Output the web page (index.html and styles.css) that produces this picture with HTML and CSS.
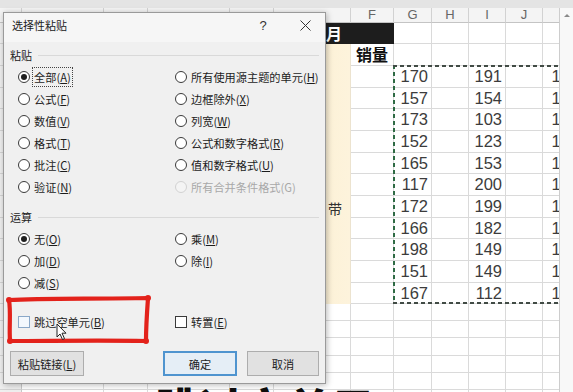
FILE: index.html
```html
<!DOCTYPE html>
<html lang="zh-CN">
<head>
<meta charset="utf-8">
<title>选择性粘贴</title>
<link rel="stylesheet" href="styles.css">
</head>
<body>
<div class="screen">
  <div class="topbar"></div>
  <div class="workarea">
    <div class="sheet-view">
      <div class="sheet">
        <div class="c hd corner"></div><div class="c hd"></div><div class="c hd"></div><div class="c hd"></div><div class="c hd"></div><div class="c hd"></div><div class="c hd">F</div><div class="c hd">G</div><div class="c hd">H</div><div class="c hd">I</div><div class="c hd">J</div><div class="c hd"></div>

        <div class="c rh"></div><div class="c title">1月</div><div class="c"></div><div class="c"></div><div class="c"></div><div class="c"></div><div class="c"></div>

        <div class="c rh"></div><div class="c"></div><div class="c"></div><div class="c"></div><div class="c"></div><div class="c cream"><span>带</span></div><div class="c lbl">销量</div><div class="c"></div><div class="c"></div><div class="c"></div><div class="c"></div><div class="c"></div>

        <div class="c rh"></div><div class="c"></div><div class="c"></div><div class="c"></div><div class="c"></div><div class="c"></div><div class="c num">170</div><div class="c"></div><div class="c num">191</div><div class="c"></div><div class="c num">185</div>
        <div class="c rh"></div><div class="c"></div><div class="c"></div><div class="c"></div><div class="c"></div><div class="c"></div><div class="c num">157</div><div class="c"></div><div class="c num">154</div><div class="c"></div><div class="c num">162</div>
        <div class="c rh"></div><div class="c"></div><div class="c"></div><div class="c"></div><div class="c"></div><div class="c"></div><div class="c num">173</div><div class="c"></div><div class="c num">103</div><div class="c"></div><div class="c num">140</div>
        <div class="c rh"></div><div class="c"></div><div class="c"></div><div class="c"></div><div class="c"></div><div class="c"></div><div class="c num">152</div><div class="c"></div><div class="c num">123</div><div class="c"></div><div class="c num">178</div>
        <div class="c rh"></div><div class="c"></div><div class="c"></div><div class="c"></div><div class="c"></div><div class="c"></div><div class="c num">165</div><div class="c"></div><div class="c num">153</div><div class="c"></div><div class="c num">131</div>
        <div class="c rh"></div><div class="c"></div><div class="c"></div><div class="c"></div><div class="c"></div><div class="c"></div><div class="c num">117</div><div class="c"></div><div class="c num">200</div><div class="c"></div><div class="c num">159</div>
        <div class="c rh"></div><div class="c"></div><div class="c"></div><div class="c"></div><div class="c"></div><div class="c"></div><div class="c num">172</div><div class="c"></div><div class="c num">199</div><div class="c"></div><div class="c num">120</div>
        <div class="c rh"></div><div class="c"></div><div class="c"></div><div class="c"></div><div class="c"></div><div class="c"></div><div class="c num">166</div><div class="c"></div><div class="c num">182</div><div class="c"></div><div class="c num">193</div>
        <div class="c rh"></div><div class="c"></div><div class="c"></div><div class="c"></div><div class="c"></div><div class="c"></div><div class="c num">198</div><div class="c"></div><div class="c num">149</div><div class="c"></div><div class="c num">166</div>
        <div class="c rh"></div><div class="c"></div><div class="c"></div><div class="c"></div><div class="c"></div><div class="c"></div><div class="c num">151</div><div class="c"></div><div class="c num">149</div><div class="c"></div><div class="c num">174</div>
        <div class="c rh"></div><div class="c"></div><div class="c"></div><div class="c"></div><div class="c"></div><div class="c"></div><div class="c num">167</div><div class="c"></div><div class="c num">112</div><div class="c"></div><div class="c num">128</div>

        <div class="c rh"></div><div class="c"></div><div class="c"></div><div class="c"></div><div class="c"></div><div class="c"></div><div class="c"></div><div class="c"></div><div class="c"></div><div class="c"></div><div class="c"></div><div class="c"></div>
        <div class="c rh"></div><div class="c"></div><div class="c"></div><div class="c"></div><div class="c"></div><div class="c"></div><div class="c"></div><div class="c"></div><div class="c"></div><div class="c"></div><div class="c"></div><div class="c"></div>
        <div class="c rh"></div><div class="c"></div><div class="c"></div><div class="c"></div><div class="c"></div><div class="c"></div><div class="c"></div><div class="c"></div><div class="c"></div><div class="c"></div><div class="c"></div><div class="c"></div>
        <div class="c rh"></div><div class="c"></div><div class="c"></div><div class="c"></div><div class="c"></div><div class="c"></div><div class="c"></div><div class="c"></div><div class="c"></div><div class="c"></div><div class="c"></div><div class="c"></div>
        <div class="c rh"></div><div class="c"></div><div class="c"></div><div class="c"></div><div class="c"></div><div class="c"></div><div class="c"></div><div class="c"></div><div class="c"></div><div class="c"></div><div class="c"></div><div class="c"></div>
        <div class="c rh"></div><div class="c"></div><div class="c"></div><div class="c"></div><div class="c"></div><div class="c"></div><div class="c"></div><div class="c"></div><div class="c"></div><div class="c"></div><div class="c"></div><div class="c"></div>
      </div>
      <div class="copy-marquee"></div>
    </div>
    <div class="vscroll"><span class="arrow-up"></span></div>
  </div>

  <div class="dialog">
    <div class="dlg-title">
      <span class="dlg-caption">选择性粘贴</span>
      <span class="dlg-help">?</span>
      <span class="dlg-close"><svg width="11" height="11" viewBox="0 0 11 11"><path d="M0.5 0.5 L10.5 10.5 M10.5 0.5 L0.5 10.5" stroke="#333" stroke-width="1" fill="none"/></svg></span>
    </div>
    <div class="dlg-body">
      <div class="group-label"><span>粘贴</span></div>
      <div class="options">
        <div class="opt"><span class="radio on"></span><span class="focus">全部(<u>A</u>)</span></div>
        <div class="opt"><span class="radio"></span><span>所有使用源主题的单元(<u>H</u>)</span></div>
        <div class="opt"><span class="radio"></span><span>公式(<u>F</u>)</span></div>
        <div class="opt"><span class="radio"></span><span>边框除外(<u>X</u>)</span></div>
        <div class="opt"><span class="radio"></span><span>数值(<u>V</u>)</span></div>
        <div class="opt"><span class="radio"></span><span>列宽(<u>W</u>)</span></div>
        <div class="opt"><span class="radio"></span><span>格式(<u>T</u>)</span></div>
        <div class="opt"><span class="radio"></span><span>公式和数字格式(<u>R</u>)</span></div>
        <div class="opt"><span class="radio"></span><span>批注(<u>C</u>)</span></div>
        <div class="opt"><span class="radio"></span><span>值和数字格式(<u>U</u>)</span></div>
        <div class="opt"><span class="radio"></span><span>验证(<u>N</u>)</span></div>
        <div class="opt disabled"><span class="radio"></span><span>所有合并条件格式(G)</span></div>
      </div>
      <div class="group-label ops"><span>运算</span></div>
      <div class="options">
        <div class="opt"><span class="radio on"></span><span>无(<u>O</u>)</span></div>
        <div class="opt"><span class="radio"></span><span>乘(<u>M</u>)</span></div>
        <div class="opt"><span class="radio"></span><span>加(<u>D</u>)</span></div>
        <div class="opt"><span class="radio"></span><span>除(<u>I</u>)</span></div>
        <div class="opt"><span class="radio"></span><span>减(<u>S</u>)</span></div>
      </div>
      <div class="options checks">
        <div class="opt"><span class="check hover"></span><span>跳过空单元(<u>B</u>)</span></div>
        <div class="opt"><span class="check"></span><span>转置(<u>E</u>)</span></div>
      </div>
    </div>
    <div class="dlg-buttons">
      <button class="btn">粘贴链接(<u>L</u>)</button>
      <button class="btn default">确定</button>
      <button class="btn">取消</button>
    </div>
  </div>

  <svg class="annotation" width="160" height="58" viewBox="0 0 160 58">
    <path d="M9 10 C40 8, 90 9, 148 8 C147 22, 146 36, 146 51 C100 50, 50 51, 10 51 C9 36, 11 22, 9 10 Z" fill="none" stroke="#e3221b" stroke-width="4.2" stroke-linejoin="round" stroke-linecap="round"/>
    <circle cx="9" cy="10" r="3" fill="#e3221b"/>
    <circle cx="148" cy="8" r="3" fill="#e3221b"/>
    <circle cx="146" cy="51" r="3" fill="#e3221b"/>
    <circle cx="10" cy="51" r="3" fill="#e3221b"/>
  </svg>

  <svg class="cursor" width="12" height="18" viewBox="0 0 12 18">
    <path d="M1 1 L1 14 L4 11 L6.5 16.5 L8.5 15.6 L6 10.2 L10 10.2 Z" fill="#fff" stroke="#222" stroke-width="1" stroke-linejoin="round"/>
  </svg>

  <div class="caption">跳过空单元</div>
</div>
</body>
</html>
```

FILE: styles.css
```css
* { box-sizing: border-box; }

html, body {
  margin: 0;
  padding: 0;
  background: #fff;
}

.screen {
  position: relative;
  width: 573px;
  height: 392px;
  overflow: hidden;
  background: #fff;
  font-family: "Liberation Sans", Arial, sans-serif;
}

.topbar {
  height: 8px;
  background: #e4e4e4;
}

.workarea {
  display: flex;
  height: 384px;
}

.sheet-view {
  position: relative;
  width: 559px;
  overflow: hidden;
}

.sheet {
  display: grid;
  width: 583px;
  grid-template-columns: 22px 82px 44px 82px 44px 77px 43px 38px 37px 37px 37px 40px;
  grid-template-rows: 15px 21px 22px 22px 21px 22px 22px 21px 22px 22px 21px 22px 22px 21px 17px 17px 18px 17px 17px 17px;
}

.c {
  border-right: 1px solid #dadada;
  border-bottom: 1px solid #dadada;
  background: #fff;
  min-width: 0;
  overflow: hidden;
  white-space: nowrap;
}

.hd {
  background: #f4f4f4;
  border-right-color: #d2d2d2;
  border-bottom-color: #c4c4c4;
  color: #666;
  font-size: 13px;
  line-height: 14px;
  text-align: center;
}

.rh {
  background: #efefef;
  border-right-color: #c8c8c8;
  border-bottom-color: #d4d4d4;
}

.title {
  grid-column: span 6;
  background: #1d1d1d;
  border-color: #1d1d1d;
  color: #fff;
  font-family: "Noto Sans CJK SC", sans-serif;
  font-weight: 700;
  font-size: 16px;
  line-height: 20px;
  text-align: right;
  padding-right: 51px;
}

.cream {
  grid-row: span 12;
  background: linear-gradient(to right, #f3e6c6 0%, #fcf0d3 40%, #fdf3dc 100%);
  border-right-color: #ece3cf;
  border-bottom: none;
  padding: 156px 0 0 54px;
  font-family: "Noto Sans CJK SC", sans-serif;
  font-size: 14px;
  color: #333;
  line-height: 16px;
}

.lbl {
  font-family: "Noto Sans CJK SC", sans-serif;
  font-weight: 700;
  font-size: 16px;
  color: #111;
  text-align: center;
  line-height: 21px;
}

.num {
  font-size: 16.5px;
  color: #3c3c3c;
  text-align: right;
  padding-right: 3px;
  line-height: 21px;
}

.copy-marquee {
  position: absolute;
  left: 393px;
  top: 57px;
  width: 200px;
  height: 239px;
  background:
    repeating-linear-gradient(90deg, #414b45 0 4px, transparent 4px 7px) left top / 100% 2px no-repeat,
    repeating-linear-gradient(90deg, #414b45 0 4px, transparent 4px 7px) left bottom / 100% 2px no-repeat,
    repeating-linear-gradient(180deg, #2f6b45 0 4px, transparent 4px 7px) left top / 2px 100% no-repeat;
}

.vscroll {
  width: 14px;
  background: #f8f8f8;
  border-left: 1px solid #cdcdcd;
  display: flex;
  justify-content: center;
  padding-top: 6px;
}

.arrow-up {
  width: 0;
  height: 0;
  border-left: 3px solid transparent;
  border-right: 3px solid transparent;
  border-bottom: 3px solid #8a8a8a;
}

/* dialog */
.dialog {
  position: absolute;
  left: 3px;
  top: 12px;
  width: 323px;
  height: 372px;
  background: #f0f0f0;
  border: 1px solid #9a9a9a;
  box-shadow: 1px 1px 6px rgba(0, 0, 0, 0.28);
  display: flex;
  flex-direction: column;
  font-family: "Noto Sans CJK SC", sans-serif;
  font-size: 11.2px;
  color: #1c1c1c;
}

.dlg-title {
  height: 29px;
  display: flex;
  align-items: center;
  padding: 0 0 5px 8px;
  background: #f6f6f6;
}

.dlg-caption {
  font-size: 11px;
  color: #222;
  flex: 1;
}

.dlg-help {
  width: 14px;
  text-align: center;
  font-family: "Liberation Sans", sans-serif;
  font-size: 13px;
  color: #333;
  margin-right: 30px;
}

.dlg-close {
  display: flex;
  margin-right: 14px;
}

.dlg-body {
  padding: 0 6px 0 14px;
}

.group-label {
  display: flex;
  align-items: center;
  gap: 6px;
  height: 18px;
  margin: 4px 0 2px -8px;
  font-size: 11px;
}

.group-label::after {
  content: "";
  flex: 1;
  height: 1px;
  background: #d9d9d9;
}

.group-label.ops {
  margin-top: 10px;
}

.options {
  display: grid;
  grid-template-columns: 157px 1fr;
  grid-auto-rows: 22px;
}

.options.checks {
  margin-top: 17px;
}

.opt {
  display: flex;
  align-items: center;
  gap: 4px;
  white-space: nowrap;
}

.opt u {
  text-decoration: underline;
  text-underline-offset: 1px;
}

.opt.disabled {
  color: #a8a8a8;
}

.radio {
  width: 12px;
  height: 12px;
  border-radius: 50%;
  border: 1px solid #3a3a3a;
  background: #fff;
  display: flex;
  align-items: center;
  justify-content: center;
  flex: none;
}

.radio.on::after {
  content: "";
  width: 6px;
  height: 6px;
  border-radius: 50%;
  background: #1e1e1e;
}

.opt.disabled .radio {
  border-color: #d2d2d2;
  background: #f4f4f4;
}

.focus {
  outline: 1px dotted #444;
  outline-offset: 1px;
}

.check {
  width: 12px;
  height: 12px;
  border: 1px solid #3a3a3a;
  background: #fff;
  flex: none;
}

.check.hover {
  border-color: #8aa8c8;
  background: #f3f8fd;
}

.dlg-buttons {
  display: flex;
  gap: 10px;
  padding: 0 6px;
  margin-top: 18px;
}

.btn {
  height: 25px;
  width: 74px;
  border: 1px solid #adadad;
  background: #e1e1e1;
  font-family: "Noto Sans CJK SC", sans-serif;
  font-size: 11.2px;
  color: #1c1c1c;
  padding: 0;
  display: flex;
  align-items: center;
  justify-content: center;
}

.btn.default {
  margin-left: auto;
  border: 2px solid #4f94cf;
  background: #e5eef6;
}

.btn:last-child {
  width: 72px;
}

.annotation {
  position: absolute;
  left: 0;
  top: 290px;
}

.cursor {
  position: absolute;
  left: 56px;
  top: 323px;
}

.caption {
  position: absolute;
  left: 155px;
  top: 385px;
  font-family: "Noto Sans CJK SC", sans-serif;
  font-weight: 900;
  font-size: 44px;
  line-height: 44px;
  color: #0d0d0d;
  white-space: nowrap;
}
```
